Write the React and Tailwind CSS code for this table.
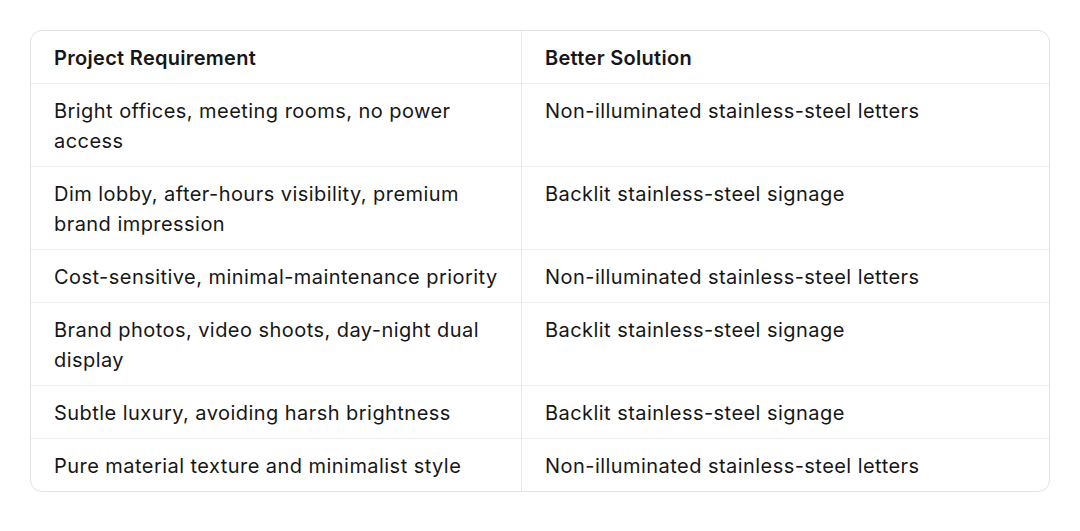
import React from 'react'

const rows = [
  ['Bright offices, meeting rooms, no power access', 'Non-illuminated stainless-steel letters'],
  ['Dim lobby, after-hours visibility, premium brand impression', 'Backlit stainless-steel signage'],
  ['Cost-sensitive, minimal-maintenance priority', 'Non-illuminated stainless-steel letters'],
  ['Brand photos, video shoots, day-night dual display', 'Backlit stainless-steel signage'],
  ['Subtle luxury, avoiding harsh brightness', 'Backlit stainless-steel signage'],
  ['Pure material texture and minimalist style', 'Non-illuminated stainless-steel letters'],
]

const App = () => {
  return (
    <div className="w-[1080px] h-[531px] bg-white pt-[30px] px-[30px] [font-family:Inter,'Noto_Sans',sans-serif] text-[#161618] tracking-[0.45px]">
      <div className="border border-[#e3e3e3] rounded-[12px] overflow-hidden">
        <div className="grid grid-cols-[491px_1fr] text-[20px] leading-[30px] font-semibold tracking-[0.3px]">
          <div className="px-[23px] pt-[12px] pb-[10px] border-r border-[#e8e8e8]">Project Requirement</div>
          <div className="px-[23px] pt-[12px] pb-[10px]">Better Solution</div>
        </div>
        {rows.map((r, i) => (
          <div key={i} className="grid grid-cols-[491px_1fr] text-[20px] leading-[30px] border-t border-[#ececec]">
            <div className="pl-[23px] pr-[6px] pt-[12px] pb-[10px] border-r border-[#e8e8e8]">
              <p className="max-w-[458px]">{r[0]}</p>
            </div>
            <div className="px-[23px] pt-[12px] pb-[10px]">{r[1]}</div>
          </div>
        ))}
      </div>
    </div>
  )
}

export default App
